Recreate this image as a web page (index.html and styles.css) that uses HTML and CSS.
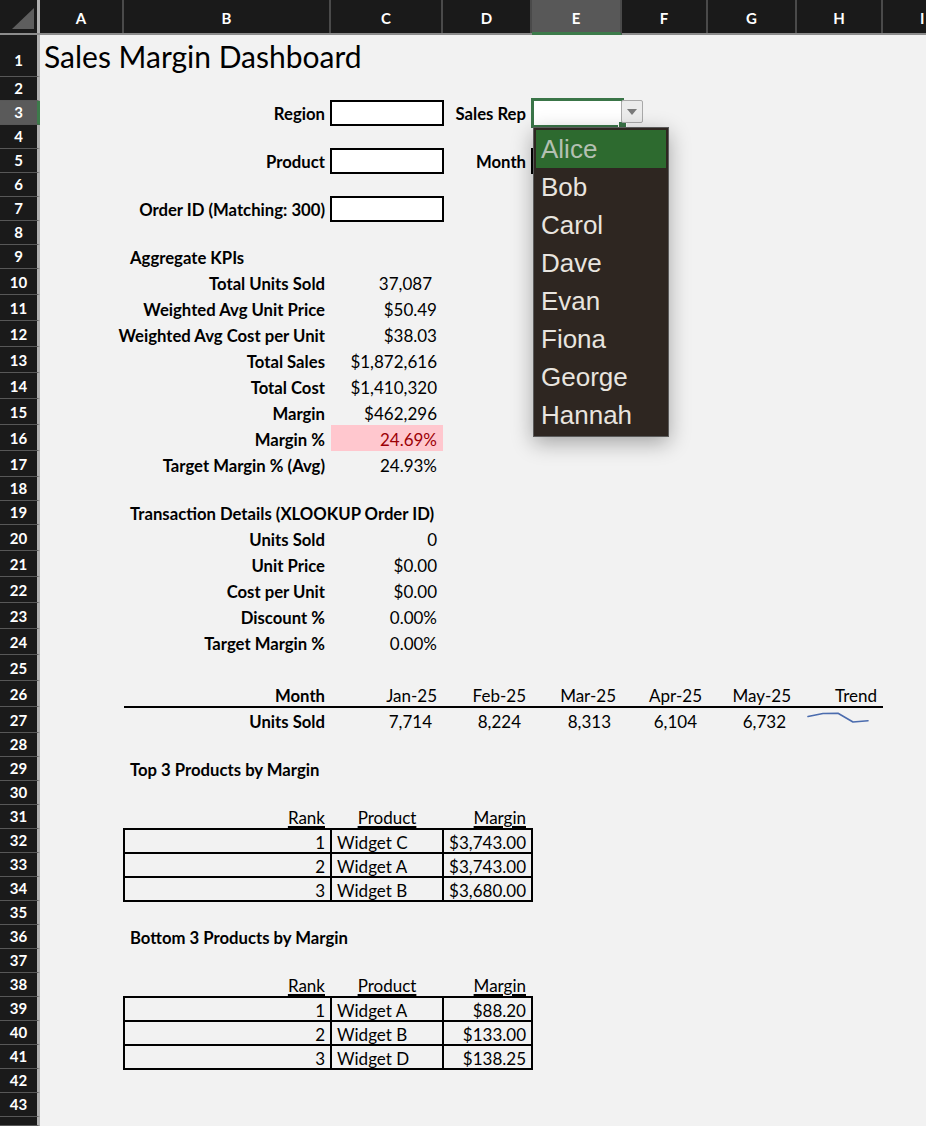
FILE: index.html
```html
<!DOCTYPE html>
<html>
<head>
<meta charset="utf-8">
<title>Sales Margin Dashboard</title>
<link rel="stylesheet" href="styles.css">
</head>
<body>
<div class="sheet">
  <div class="colhead">
    <div class="corner"><svg width="22" height="21" viewBox="0 0 22 21"><polygon points="0,21 22,21 22,0" fill="#5e5e5e"/></svg></div>
    <div class="ch">A</div><div class="ch">B</div><div class="ch">C</div><div class="ch">D</div>
    <div class="ch sel">E</div><div class="ch">F</div><div class="ch">G</div><div class="ch">H</div><div class="ch edge">I</div>
  </div>

  <div class="row r1"><div class="rh rh1">1</div><div class="cell cA title">Sales Margin Dashboard</div></div>
  <div class="row"><div class="rh">2</div></div>
  <div class="row">
    <div class="rh sel">3</div>
    <div class="cell cB r b">Region</div>
    <div class="cell cC box"></div>
    <div class="cell cD r b">Sales Rep</div>
    <div class="cell cE active">
      <div class="sel-frame"></div>
      <div class="handle"></div>
      <div class="ddbtn"><svg width="10" height="6" viewBox="0 0 10 6"><polygon points="0,0 10,0 5,6" fill="#7a7a7a"/></svg></div>
      <div class="ddlist">
        <div class="item hi">Alice</div>
        <div class="item">Bob</div>
        <div class="item">Carol</div>
        <div class="item">Dave</div>
        <div class="item">Evan</div>
        <div class="item">Fiona</div>
        <div class="item">George</div>
        <div class="item">Hannah</div>
      </div>
    </div>
  </div>
  <div class="row"><div class="rh">4</div></div>
  <div class="row">
    <div class="rh">5</div>
    <div class="cell cB r b">Product</div>
    <div class="cell cC box"></div>
    <div class="cell cD r b">Month</div>
    <div class="cell cE box"></div>
  </div>
  <div class="row"><div class="rh">6</div></div>
  <div class="row">
    <div class="rh">7</div>
    <div class="cell cB r b">Order ID (Matching: 300)</div>
    <div class="cell cC box"></div>
  </div>
  <div class="row"><div class="rh">8</div></div>
  <div class="row"><div class="rh">9</div><div class="cell cB b">Aggregate KPIs</div></div>
  <div class="row t"><div class="rh">10</div><div class="cell cB r b">Total Units Sold</div><div class="cell cC r n">37,087</div></div>
  <div class="row t"><div class="rh">11</div><div class="cell cB r b">Weighted Avg Unit Price</div><div class="cell cC r">$50.49</div></div>
  <div class="row t"><div class="rh">12</div><div class="cell cB r b">Weighted Avg Cost per Unit</div><div class="cell cC r">$38.03</div></div>
  <div class="row t"><div class="rh">13</div><div class="cell cB r b">Total Sales</div><div class="cell cC r">$1,872,616</div></div>
  <div class="row t"><div class="rh">14</div><div class="cell cB r b">Total Cost</div><div class="cell cC r">$1,410,320</div></div>
  <div class="row t"><div class="rh">15</div><div class="cell cB r b">Margin</div><div class="cell cC r">$462,296</div></div>
  <div class="row t"><div class="rh">16</div><div class="cell cB r b">Margin %</div><div class="cell cC r bad">24.69%</div></div>
  <div class="row t"><div class="rh">17</div><div class="cell cB r b">Target Margin % (Avg)</div><div class="cell cC r">24.93%</div></div>
  <div class="row"><div class="rh">18</div></div>
  <div class="row"><div class="rh">19</div><div class="cell cB b">Transaction Details (XLOOKUP Order ID)</div></div>
  <div class="row t"><div class="rh">20</div><div class="cell cB r b">Units Sold</div><div class="cell cC r">0</div></div>
  <div class="row t"><div class="rh">21</div><div class="cell cB r b">Unit Price</div><div class="cell cC r">$0.00</div></div>
  <div class="row t"><div class="rh">22</div><div class="cell cB r b">Cost per Unit</div><div class="cell cC r">$0.00</div></div>
  <div class="row t"><div class="rh">23</div><div class="cell cB r b">Discount %</div><div class="cell cC r">0.00%</div></div>
  <div class="row t"><div class="rh">24</div><div class="cell cB r b">Target Margin %</div><div class="cell cC r">0.00%</div></div>
  <div class="row t"><div class="rh">25</div></div>
  <div class="row t">
    <div class="rh">26</div>
    <div class="cell cB r b ul">Month</div>
    <div class="cell cC r ul">Jan-25</div>
    <div class="cell cD r ul">Feb-25</div>
    <div class="cell cE r ul">Mar-25</div>
    <div class="cell cF r ul">Apr-25</div>
    <div class="cell cG r ul">May-25</div>
    <div class="cell cH r ul">Trend</div>
  </div>
  <div class="row t">
    <div class="rh">27</div>
    <div class="cell cB r b">Units Sold</div>
    <div class="cell cC r n">7,714</div>
    <div class="cell cD r n">8,224</div>
    <div class="cell cE r n">8,313</div>
    <div class="cell cF r n">6,104</div>
    <div class="cell cG r n">6,732</div>
    <div class="cell cH spark"><svg width="86" height="26" viewBox="0 0 86 26"><polyline points="11,9.5 26,6.5 41,6.2 56,15 71,13.8" fill="none" stroke="#4b6cae" stroke-width="1.6" stroke-linejoin="round" stroke-linecap="round"/></svg></div>
  </div>
  <div class="row"><div class="rh">28</div></div>
  <div class="row"><div class="rh">29</div><div class="cell cB b">Top 3 Products by Margin</div></div>
  <div class="row"><div class="rh">30</div></div>
  <div class="row">
    <div class="rh">31</div>
    <div class="cell cB r"><span class="hd">Rank</span></div>
    <div class="cell cC ctr"><span class="hd">Product</span></div>
    <div class="cell cD r"><span class="hd">Margin</span></div>
  </div>
  <div class="row"><div class="rh">32</div><div class="cell cB r tb">1</div><div class="cell cC tb">Widget C</div><div class="cell cD r tb">$3,743.00</div></div>
  <div class="row"><div class="rh">33</div><div class="cell cB r tb">2</div><div class="cell cC tb">Widget A</div><div class="cell cD r tb">$3,743.00</div></div>
  <div class="row"><div class="rh">34</div><div class="cell cB r tb">3</div><div class="cell cC tb">Widget B</div><div class="cell cD r tb">$3,680.00</div></div>
  <div class="row"><div class="rh">35</div></div>
  <div class="row"><div class="rh">36</div><div class="cell cB b">Bottom 3 Products by Margin</div></div>
  <div class="row"><div class="rh">37</div></div>
  <div class="row">
    <div class="rh">38</div>
    <div class="cell cB r"><span class="hd">Rank</span></div>
    <div class="cell cC ctr"><span class="hd">Product</span></div>
    <div class="cell cD r"><span class="hd">Margin</span></div>
  </div>
  <div class="row"><div class="rh">39</div><div class="cell cB r tb">1</div><div class="cell cC tb">Widget A</div><div class="cell cD r tb">$88.20</div></div>
  <div class="row"><div class="rh">40</div><div class="cell cB r tb">2</div><div class="cell cC tb">Widget B</div><div class="cell cD r tb">$133.00</div></div>
  <div class="row"><div class="rh">41</div><div class="cell cB r tb">3</div><div class="cell cC tb">Widget D</div><div class="cell cD r tb">$138.25</div></div>
  <div class="row"><div class="rh">42</div></div>
  <div class="row"><div class="rh">43</div></div>
  <div class="row last"><div class="rh"></div></div>
</div>
</body>
</html>
```
FILE: styles.css
```css
* { box-sizing: border-box; }
html, body { margin: 0; padding: 0; }
body {
  width: 926px;
  height: 1126px;
  overflow: hidden;
  background: #f2f2f2;
  font-family: Lato, "Open Sans", sans-serif;
  font-size: 17px;
  color: #000;
}
.sheet { display: flex; flex-direction: column; width: 926px; }
.colhead, .row {
  display: grid;
  grid-template-columns: 40px 84px 207px 112px 89px 90px 86px 89px 86px 43px;
}
.colhead { height: 35px; background: #1a1a1a; border-bottom: 2px solid #8c8c8c; }
.corner {
  display: flex; justify-content: flex-end; align-items: flex-end;
  padding: 0 3px 4px 0;
  border-right: 3px solid #b0b0b0;
}
.ch {
  display: flex; align-items: center; justify-content: center;
  color: #fff; font-weight: 700; font-size: 15px; line-height: 18px;
  padding-top: 3px;
  border-right: 2px solid #4a4a4a;
}
.ch.edge { justify-content: flex-start; padding-left: 37px; border-right: none; }
.ch.sel { background: #585858; border-bottom: 3px solid #3d7b4b; margin-bottom: -2px; }

.row { height: 24px; }
.row.t { height: 26px; }
.row.r1 { height: 42px; }
.row.last { height: 9px; }
.rh {
  grid-column: 1;
  display: flex; justify-content: center; align-items: flex-end;
  padding-bottom: 3px;
  background: #1a1a1a; color: #fff;
  font-weight: 700; font-size: 15px; line-height: 18px;
  border-right: 3px solid #b0b0b0;
  border-bottom: 1px solid #575757;
}
.rh1 { padding-bottom: 7px; }
.rh.sel { background: #5a5a5a; border-right-color: #3d7b4b; }

.cell {
  display: flex; align-items: flex-end;
  padding: 0 6px 2px 6px;
  line-height: 18px;
  white-space: nowrap;
}
.cA { grid-column: 2; }
.cB { grid-column: 3; }
.cC { grid-column: 4; }
.cD { grid-column: 5; }
.cE { grid-column: 6; }
.cF { grid-column: 7; }
.cG { grid-column: 8; }
.cH { grid-column: 9; }
.r { justify-content: flex-end; }
.ctr { justify-content: center; }
.b { font-weight: 700; font-size: 16.7px; }
.n { padding-right: 11px; }
.title { font-size: 30px; line-height: 34px; padding-left: 4px; padding-bottom: 4px; }
.box { background: #fff; border: 2px solid #000; margin: -1px; }
.bad { background: #ffc7ce; color: #9c0006; }
.ul { border-bottom: 2px solid #000; padding-bottom: 1px; margin-bottom: -1px; }
.hd { text-decoration: underline; text-decoration-thickness: 2px; text-underline-offset: 2px; }
.tb { border: 2px solid #000; margin: -1px; padding: 0 5px 0 5px; }
.spark { padding: 0; }

.active { position: relative; background: #fff; }
.sel-frame {
  position: absolute; left: -1px; top: -3px; right: -2px; bottom: -3px;
  border: 3px solid #3a7548;
}
.handle {
  position: absolute; right: -5px; bottom: -5px; width: 9px; height: 9px;
  background: #3a7548; border: 1px solid #fff;
}
.ddbtn {
  position: absolute; left: 89px; top: -1px; width: 22px; height: 23px;
  background: #ececec; border: 1px solid #a9a9a9; border-radius: 2px;
  display: flex; align-items: center; justify-content: center;
}
.ddlist {
  position: absolute; left: 1px; top: 26px; width: 136px;
  padding: 2px;
  background: #2e2621;
  border: 1px solid #5b5b5b;
  box-shadow: 0 6px 20px rgba(0, 0, 0, 0.32);
  z-index: 10;
  font-family: "Liberation Sans", Arial, sans-serif;
  font-size: 26px;
  color: #e8e4df;
}
.item { height: 38px; line-height: 38px; padding-left: 5px; }
.item.hi { background: #2d6a2f; color: #b4c0b2; }
```
